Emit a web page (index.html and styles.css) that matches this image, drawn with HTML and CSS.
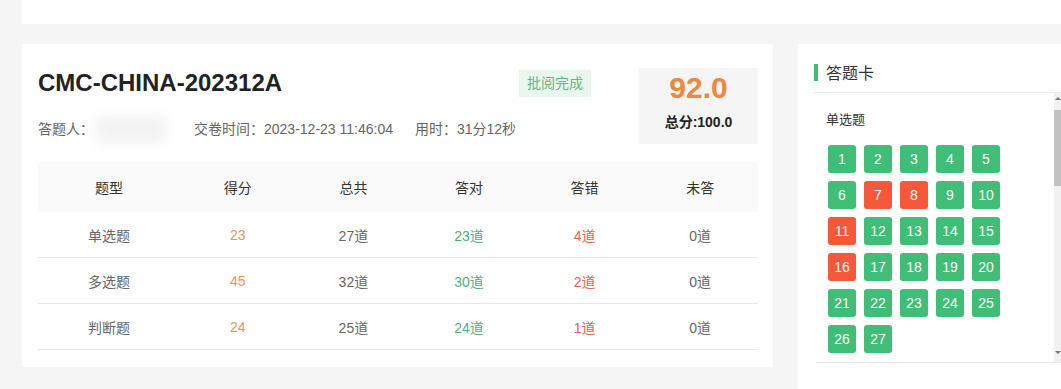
FILE: index.html
```html
<html lang="zh-CN">
    <head>
        <meta charset="UTF-8">
        <title>成绩详情</title>
        <link rel="stylesheet" href="styles.css">
    </head>
    <body>
        <!--top bar, mostly scrolled away-->
        <div class="top-card"></div>

        <div class="page">
            <!--result card-->
            <div class="result-card">
                <div class="result-head">
                    <div class="result-info">
                        <h1 class="exam-title">CMC-CHINA-202312A</h1>
                        <div class="meta">
                            <span>答题人：</span><span class="blurred"></span>
                            <span class="meta-time">交卷时间：2023-12-23 11:46:04</span>
                            <span class="meta-used">用时：31分12秒</span>
                        </div>
                    </div>
                    <span class="status-tag">批阅完成</span>
                    <div class="score-box">
                        <div class="score">92.0</div>
                        <div class="total">总分:100.0</div>
                    </div>
                </div>

                <div class="stat-table">
                    <div class="stat-row stat-header">
                        <div>题型</div><div>得分</div><div>总共</div><div>答对</div><div>答错</div><div>未答</div>
                    </div>
                    <div class="stat-row">
                        <div>单选题</div><div class="c-score">23</div><div>27道</div><div class="c-right">23道</div><div class="c-wrong">4道</div><div>0道</div>
                    </div>
                    <div class="stat-row">
                        <div>多选题</div><div class="c-score">45</div><div>32道</div><div class="c-right">30道</div><div class="c-wrong">2道</div><div>0道</div>
                    </div>
                    <div class="stat-row">
                        <div>判断题</div><div class="c-score">24</div><div>25道</div><div class="c-right">24道</div><div class="c-wrong">1道</div><div>0道</div>
                    </div>
                </div>
            </div>

            <!--answer sheet-->
            <div class="sheet-card">
                <div class="sheet-title">答题卡</div>
                <div class="sheet-body">
                    <div class="sheet-scroll">
                        <div class="sheet-group">单选题</div>
                        <div class="num-grid">
                            <span class="num">1</span><span class="num">2</span><span class="num">3</span><span class="num">4</span><span class="num">5</span>
                            <span class="num">6</span><span class="num wrong">7</span><span class="num wrong">8</span><span class="num">9</span><span class="num">10</span>
                            <span class="num wrong">11</span><span class="num">12</span><span class="num">13</span><span class="num">14</span><span class="num">15</span>
                            <span class="num wrong">16</span><span class="num">17</span><span class="num">18</span><span class="num">19</span><span class="num">20</span>
                            <span class="num">21</span><span class="num">22</span><span class="num">23</span><span class="num">24</span><span class="num">25</span>
                            <span class="num">26</span><span class="num">27</span>
                        </div>
                    </div>
                    <!--fake scrollbar-->
                    <div class="scrollbar">
                        <span class="arrow-up"></span>
                        <span class="thumb"></span>
                        <span class="arrow-down"></span>
                    </div>
                </div>
            </div>
        </div>
    </body>
</html>
```

FILE: styles.css
```css
body {
    margin: 0;
    padding: 0 0 0 22px;
    background-color: #f5f5f5; /*light grey page*/
    font-family: "Liberation Sans", "Noto Sans CJK SC", sans-serif;
    color: #333;
    overflow: hidden;
}

.top-card {
    height: 24px;
    background-color: #fff;
}

.page {
    display: flex;
    align-items: flex-start;
    gap: 25px;
    margin-top: 20px;
}

/* ---------- result card ---------- */

.result-card {
    width: 751px;
    box-sizing: border-box;
    background-color: #fff;
    padding: 24px 15px 17px 16px;
}

.result-head {
    display: flex;
    align-items: flex-start;
}

.result-info {
    flex: 1 1 0;
    min-width: 0; /*meta line may run under the tag*/
}

.exam-title {
    margin: 0;
    font-size: 24px;
    line-height: 30px;
    font-weight: bold;
    color: #222;
}

.meta {
    display: flex;
    align-items: center;
    margin-top: 18px;
    font-size: 14px;
    line-height: 20px;
    color: #666;
    white-space: nowrap;
}

.blurred {
    flex-shrink: 0;
    width: 70px;
    height: 26px;
    margin-left: 2px;
    background-color: #f2f2f2;
    filter: blur(6px); /*hidden name*/
}

.meta-time {
    margin-left: 28px;
}

.meta-used {
    margin-left: 22px;
}

.status-tag {
    flex-shrink: 0;
    white-space: nowrap;
    margin-top: 2px;
    padding: 0 8px;
    line-height: 27px;
    font-size: 14px;
    color: #5fb987;
    background-color: #eaf7ef;
}

.score-box {
    flex-shrink: 0;
    width: 119px;
    height: 76px;
    box-sizing: border-box;
    margin-left: 48px;
    padding-top: 3px;
    background-color: #f5f5f5;
    display: flex;
    flex-direction: column;
    align-items: center;
}

.score {
    font-size: 30px;
    line-height: 34px;
    font-weight: bold;
    color: #f0873f; /*orange*/
}

.total {
    margin-top: 7px;
    font-size: 14px;
    line-height: 20px;
    font-weight: bold;
    color: #222;
}

/* ---------- stats table ---------- */

.stat-table {
    margin-top: 18px;
    font-size: 14px;
    color: #666;
}

.stat-row {
    display: grid;
    grid-template-columns: 142px repeat(5, 1fr);
    height: 46px;
    box-sizing: border-box;
    align-items: center;
    text-align: center;
    border-bottom: 1px solid #e8e8e8;
}

.stat-header {
    height: 50px;
    background-color: #fafafa;
    border-bottom: none;
    border-radius: 4px 4px 0 0;
    color: #333;
}

.c-score {
    color: #e9935c;
}

.c-right {
    color: #52b07d;
}

.c-wrong {
    color: #e2654b;
}

/* ---------- answer sheet ---------- */

.sheet-card {
    width: 263px;
    height: 350px;
    box-sizing: border-box;
    background-color: #fff;
    padding: 19px 0 0 16px;
}

.sheet-title {
    display: flex;
    align-items: center;
    height: 18px;
    font-size: 16px;
    color: #333;
    padding-bottom: 11px;
    border-bottom: 1px solid #e8e8e8;
}

.sheet-title::before {
    content: "";
    width: 4px;
    height: 17px;
    margin-right: 8px;
    background-color: #3dbb74; /*green mark*/
}

.sheet-body {
    display: flex;
    height: 269px;
    margin-left: 2px;
    border-bottom: 1px solid #e8e8e8;
}

.sheet-scroll {
    flex-grow: 1;
    padding: 17px 0 0 10px;
}

.sheet-group {
    font-size: 13px;
    line-height: 20px;
    color: #333;
}

.num-grid {
    display: grid;
    grid-template-columns: repeat(5, 28px);
    gap: 8px;
    margin: 15px 0 0 2px;
}

.num {
    height: 28px;
    line-height: 28px;
    text-align: center;
    font-size: 14px;
    color: #fff;
    background-color: #40bd76;
    border-radius: 3px;
}

.num.wrong {
    background-color: #f5583a;
}

.scrollbar {
    width: 7px;
    background-color: #f1f1f1;
    display: flex;
    flex-direction: column;
    align-items: center;
}

.arrow-up {
    margin-top: 4px;
    border-left: 3px solid transparent;
    border-right: 3px solid transparent;
    border-bottom: 3px solid #777;
}

.thumb {
    width: 7px;
    height: 76px;
    margin-top: 10px;
    background-color: #c1c1c1;
}

.arrow-down {
    margin-top: auto;
    margin-bottom: 8px;
    border-left: 3px solid transparent;
    border-right: 3px solid transparent;
    border-top: 3px solid #777;
}
```
